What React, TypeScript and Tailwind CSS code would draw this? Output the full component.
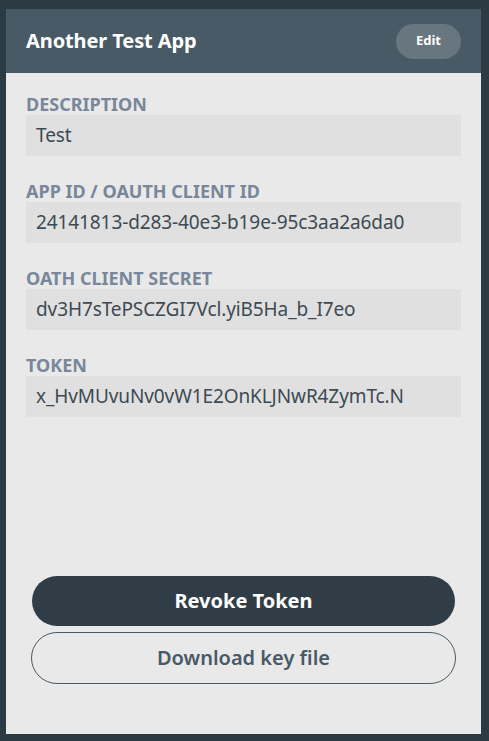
const fields = [
  { label: 'Description', value: 'Test' },
  { label: 'App ID / OAuth Client ID', value: '24141813-d283-40e3-b19e-95c3aa2a6da0' },
  { label: 'Oath Client Secret', value: 'dv3H7sTePSCZGI7Vcl.yiB5Ha_b_I7eo' },
  { label: 'Token', value: 'x_HvMUvuNv0vW1E2OnKLJNwR4ZymTc.N' },
]

export default function App() {
  return (
    <div
      className="h-[741px] w-full bg-[#2c3a43] pt-[9px] pb-[7px] pl-[6px] pr-[8px] flex"
      style={{ fontFamily: '"Noto Sans", Lato, sans-serif' }}
    >
      <div className="flex-1 flex flex-col bg-[#e9e9e9]">
        <header className="h-[64px] shrink-0 bg-[#475a66] flex items-center justify-between pl-[20px] pr-[20px]">
          <h1 className="text-[20px] font-bold text-white tracking-[-0.1px]">Another Test App</h1>
          <button
            type="button"
            className="h-[35px] w-[65px] rounded-full bg-[#67767f] text-white text-[13px] font-bold"
          >
            Edit
          </button>
        </header>

        <div className="flex-1 flex flex-col px-[20px] pt-[20px] pb-[50px]">
          {fields.map((f, i) => (
            <div key={f.label} className={i === 0 ? '' : 'mt-[24px]'}>
              <div className="h-[22px] text-[18px] leading-[22px] font-bold uppercase text-[#78879a]">{f.label}</div>
              <div className="h-[41px] bg-[#e0e0e0] flex items-center px-[10px] text-[19px] text-[#3d4a53] tracking-[-0.1px]">
                {f.value}
              </div>
            </div>
          ))}

          <div className="mt-auto flex flex-col gap-[6px]">
            <button
              type="button"
              className="mx-[6px] h-[50px] rounded-full bg-[#313d46] text-white text-[20px] font-bold"
            >
              Revoke Token
            </button>
            <button
              type="button"
              className="mx-[5px] h-[52px] rounded-full border border-[#475a66] text-[#475a66] text-[20px] font-semibold"
            >
              Download key file
            </button>
          </div>
        </div>
      </div>
    </div>
  )
}
